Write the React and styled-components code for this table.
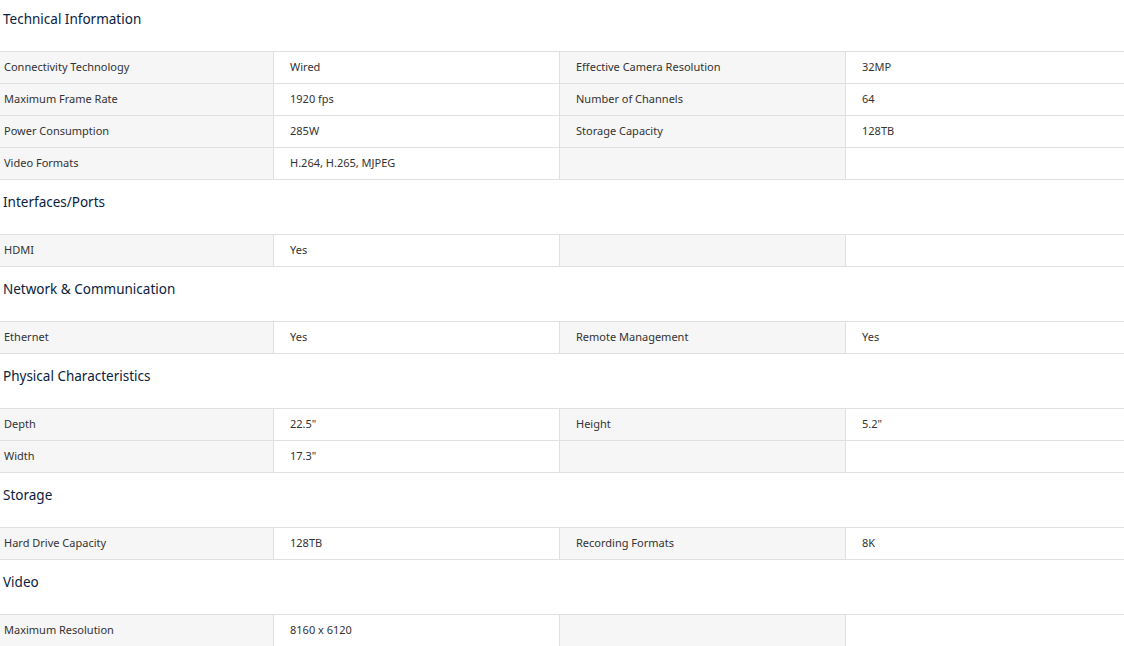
import styled, { createGlobalStyle } from 'styled-components';

const GlobalStyle = createGlobalStyle`
    body {
        margin: 0;
        background: #fff;
        font-family: 'Noto Sans', 'Open Sans', sans-serif;
    }
`;

const sections = [
    {
        title: 'Technical Information',
        rows: [
            ['Connectivity Technology', 'Wired', 'Effective Camera Resolution', '32MP'],
            ['Maximum Frame Rate', '1920 fps', 'Number of Channels', '64'],
            ['Power Consumption', '285W', 'Storage Capacity', '128TB'],
            ['Video Formats', 'H.264, H.265, MJPEG', '', ''],
        ],
    },
    { title: 'Interfaces/Ports', rows: [['HDMI', 'Yes', '', '']] },
    { title: 'Network & Communication', rows: [['Ethernet', 'Yes', 'Remote Management', 'Yes']] },
    {
        title: 'Physical Characteristics',
        rows: [
            ['Depth', '22.5"', 'Height', '5.2"'],
            ['Width', '17.3"', '', ''],
        ],
    },
    { title: 'Storage', rows: [['Hard Drive Capacity', '128TB', 'Recording Formats', '8K']] },
    { title: 'Video', rows: [['Maximum Resolution', '8160 x 6120', '', '']] },
];

const Page = styled.div`
    width: 1124px;
    display: flex;
    flex-direction: column;
`;

const Section = styled.section`
    margin-bottom: 3px;
`;

const Title = styled.h3`
    margin: 0;
    padding: 8px 3px 21px;
    font-size: 13.5px;
    line-height: 22px;
    font-weight: 400;
    color: #0a2140;
`;

const Table = styled.div`
    display: grid;
    grid-template-columns: 273px 286px 286px 1fr;
    border-top: 1px solid #e0e0e0;
`;

const Cell = styled.div`
    height: 32px;
    box-sizing: border-box;
    padding-bottom: 2px;
    display: flex;
    align-items: center;
    padding-left: ${(p) => (p.$first ? '4px' : '16px')};
    border-bottom: 1px solid #e0e0e0;
    border-left: ${(p) => (p.$first ? 'none' : '1px solid #e0e0e0')};
    background: ${(p) => (p.$label ? '#f6f6f6' : '#fff')};
    font-size: 11px;
    color: #333;
    white-space: nowrap;
`;

export default function App() {
    return (
        <Page>
            <GlobalStyle />
            {sections.map((s) => (
                <Section key={s.title}>
                    <Title>{s.title}</Title>
                    <Table>
                        {s.rows.map((r, i) =>
                            r.map((c, j) => (
                                <Cell key={i + '-' + j} $first={j === 0} $label={j % 2 === 0}>
                                    {c}
                                </Cell>
                            ))
                        )}
                    </Table>
                </Section>
            ))}
        </Page>
    );
}
